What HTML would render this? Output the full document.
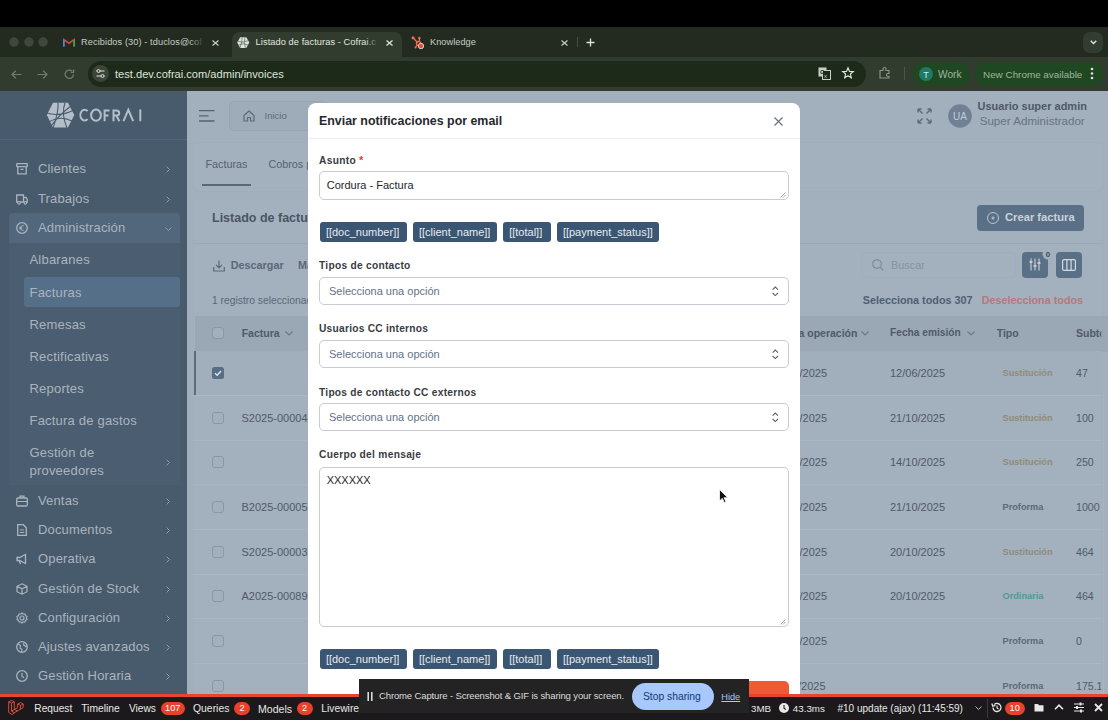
<!DOCTYPE html>
<html><head><meta charset="utf-8">
<style>
*{box-sizing:border-box;margin:0;padding:0}
html,body{width:1108px;height:720px;overflow:hidden;background:#000;font-family:"Liberation Sans",sans-serif}
.a{position:absolute}
.t{position:absolute;white-space:nowrap;line-height:1}
svg{overflow:visible}
</style></head><body>

<div class="a" style="left:0px;top:0px;width:1108px;height:27px;background:#000;"></div>
<div class="a" style="left:0px;top:27px;width:1108px;height:30px;background:#232b21;"></div>
<div class="a" style="left:0px;top:57px;width:1108px;height:34px;background:#313c2e;"></div>
<div class="a" style="left:232px;top:32px;width:170px;height:25px;background:#313c2e;border-radius:8px 8px 0 0"></div>
<svg class="a" style="left:7.6px;top:36px;" width="12" height="12" viewBox="0 0 12 12"><circle cx="6" cy="6" r="4.7" fill="#3f473d"/></svg>
<svg class="a" style="left:22.8px;top:36px;" width="12" height="12" viewBox="0 0 12 12"><circle cx="6" cy="6" r="4.7" fill="#3f473d"/></svg>
<svg class="a" style="left:37.2px;top:36px;" width="12" height="12" viewBox="0 0 12 12"><circle cx="6" cy="6" r="4.7" fill="#3f473d"/></svg>
<svg class="a" style="left:63px;top:38px;" width="12" height="9" viewBox="0 0 12 9"><path d="M0.8 8.5V1.5L6 5.2L11.2 1.5V8.5" fill="none" stroke="#d44638" stroke-width="1.6"/><path d="M0.8 2V8.5" stroke="#4285f4" stroke-width="1.6"/><path d="M11.2 2V8.5" stroke="#34a853" stroke-width="1.6"/></svg>
<div class="t" style="left:81px;top:37.81px;font-size:9.2px;color:#c6ccc3;letter-spacing:0.1px;">Recibidos (30) - tduclos@cof</div>
<div class="a" style="left:190px;top:36px;width:14px;height:12px;background:linear-gradient(90deg,rgba(35,43,33,0),#232b21);"></div>
<svg class="a" style="left:212px;top:40px;" width="7" height="6" viewBox="0 0 7 6"><path d="M0.5 0.5L6.5 5.5M6.5 0.5L0.5 5.5" stroke="#c6ccc3" stroke-width="1.2"/></svg>
<svg class="a" style="left:237px;top:37px;" width="13" height="12" viewBox="0 0 13 12"><polygon points="3.2,0.3 9.3,0.3 12.3,5.6 9.3,10.9 3.2,10.9 0.2,5.6" fill="#dfe5dc"/><path d="M5 0.3Q5.5 4 3 10.9M0.5 4.5Q6 6 12 3.5M1.5 8Q6 5.5 11.5 8M8 0.3Q6.5 5 8.5 10.9" fill="none" stroke="#5d665a" stroke-width="0.7"/></svg>
<div class="t" style="left:255.6px;top:37.81px;font-size:9.2px;color:#e3e7e0;letter-spacing:0.1px;">Listado de facturas - Cofrai.c</div>
<div class="a" style="left:365px;top:36px;width:14px;height:12px;background:linear-gradient(90deg,rgba(49,60,46,0),#313c2e);"></div>
<svg class="a" style="left:386px;top:40px;" width="7" height="6" viewBox="0 0 7 6"><path d="M0.5 0.5L6.5 5.5M6.5 0.5L0.5 5.5" stroke="#e3e7e0" stroke-width="1.2"/></svg>
<svg class="a" style="left:411px;top:35px;" width="14" height="15" viewBox="0 0 14 15"><g stroke="#f26b4f" stroke-width="1.3" fill="none"><path d="M2 2.8L7 8M8.4 3V6.3M6.3 9.8L4.5 12.5"/><circle cx="7.5" cy="8.5" r="2.1"/></g><circle cx="2" cy="2.8" r="1.5" fill="#f26b4f"/><circle cx="8.4" cy="3" r="1.2" fill="#f26b4f"/><circle cx="4.5" cy="12.5" r="1" fill="#f26b4f"/><circle cx="10" cy="11" r="2.7" fill="#f0473a" stroke="#dcdcdc" stroke-width="0.9"/></svg>
<div class="t" style="left:430px;top:37.81px;font-size:9.2px;color:#c6ccc3;letter-spacing:0.05px;">Knowledge</div>
<svg class="a" style="left:561px;top:40px;" width="7" height="6" viewBox="0 0 7 6"><path d="M0.5 0.5L6.5 5.5M6.5 0.5L0.5 5.5" stroke="#c6ccc3" stroke-width="1.2"/></svg>
<div class="a" style="left:577px;top:37px;width:1px;height:10px;background:#454d43;"></div>
<svg class="a" style="left:586px;top:38px;" width="9" height="9" viewBox="0 0 9 9"><path d="M4.5 0.5V8.5M0.5 4.5H8.5" stroke="#dfe3dc" stroke-width="1.3"/></svg>
<div class="a" style="left:1083px;top:32px;width:20px;height:21px;background:#323c30;border-radius:7px"></div>
<svg class="a" style="left:1089.5px;top:40px;" width="7" height="5" viewBox="0 0 7 5"><path d="M0.7 0.7L3.5 3.5L6.3 0.7" fill="none" stroke="#dfe3dc" stroke-width="1.4"/></svg>
<svg class="a" style="left:11px;top:70px;" width="11" height="9" viewBox="0 0 11 9"><path d="M10.5 4.5H1M4.8 0.8L1 4.5L4.8 8.2" fill="none" stroke="#737c70" stroke-width="1.2"/></svg>
<svg class="a" style="left:37px;top:70px;" width="11" height="9" viewBox="0 0 11 9"><path d="M0.5 4.5H10M6.2 0.8L10 4.5L6.2 8.2" fill="none" stroke="#737c70" stroke-width="1.2"/></svg>
<svg class="a" style="left:64px;top:69px;" width="11" height="11" viewBox="0 0 11 11"><path d="M9.5 5.5A4.2 4.2 0 1 1 8.2 2.2" fill="none" stroke="#737c70" stroke-width="1.2"/><path d="M9.6 0.6V3.4H6.8" fill="none" stroke="#737c70" stroke-width="1.2"/></svg>
<div class="a" style="left:88px;top:61px;width:778px;height:26px;background:#1d2a1a;border-radius:13px"></div>
<svg class="a" style="left:92px;top:65px;" width="17" height="17" viewBox="0 0 17 17"><circle cx="8.5" cy="8.5" r="8.5" fill="#3b4539"/><path d="M4.5 6H12.5M4.5 11H12.5" stroke="#dfe3dc" stroke-width="1.1"/><circle cx="6.5" cy="6" r="1.5" fill="#3b4539" stroke="#dfe3dc" stroke-width="1"/><circle cx="10.5" cy="11" r="1.5" fill="#3b4539" stroke="#dfe3dc" stroke-width="1"/></svg>
<div class="t" style="left:115px;top:68.60px;font-size:11.1px;color:#dfe4dc;">test.dev.cofrai.com/admin/invoices</div>
<svg class="a" style="left:818px;top:67px;" width="13" height="13" viewBox="0 0 13 13"><rect x="0.5" y="0.5" width="8" height="9" fill="#c9cfc6"/><rect x="4.5" y="3.5" width="8" height="9" fill="#1d2a1a" stroke="#c9cfc6" stroke-width="1"/><text x="2" y="7" font-size="6" fill="#1d2a1a" font-family="Liberation Sans" font-weight="bold">G</text><text x="6" y="11" font-size="6" fill="#c9cfc6" font-family="Liberation Sans">x</text></svg>
<svg class="a" style="left:842px;top:67px;" width="12" height="12" viewBox="0 0 12 12"><polygon points="6,0.8 7.5,4.4 11.3,4.6 8.4,7 9.3,10.8 6,8.7 2.7,10.8 3.6,7 0.7,4.6 4.5,4.4" fill="none" stroke="#dfe4dc" stroke-width="1.1"/></svg>
<svg class="a" style="left:879px;top:67px;" width="12" height="12" viewBox="0 0 12 12"><path d="M1 3.5H4V2A1.5 1.5 0 0 1 7 2V3.5H10V6.5H9A1.5 1.5 0 0 0 9 9.5H10V11H1Z" fill="none" stroke="#8e968b" stroke-width="1.1"/></svg>
<div class="a" style="left:904px;top:67px;width:1px;height:13px;background:#4d554b;"></div>
<div class="a" style="left:913px;top:62px;width:57px;height:24px;background:#1f4722;border-radius:12px"></div>
<svg class="a" style="left:919px;top:67px;" width="14" height="14" viewBox="0 0 14 14"><circle cx="7" cy="7" r="7" fill="#1f7a67"/><text x="7" y="10.5" font-size="9" fill="#d8e6df" text-anchor="middle" font-family="Liberation Sans">T</text></svg>
<div class="t" style="left:938px;top:70.17px;font-size:10.2px;color:#9fb59b;">Work</div>
<div class="a" style="left:975px;top:62px;width:128px;height:24px;background:#1f4722;border-radius:12px"></div>
<div class="t" style="left:983px;top:69.62px;font-size:9.9px;color:#9fb59b;">New Chrome available</div>
<svg class="a" style="left:1090px;top:67px;" width="4" height="13" viewBox="0 0 4 13"><circle cx="2" cy="2" r="1.3" fill="#dfe4dc"/><circle cx="2" cy="6.5" r="1.3" fill="#dfe4dc"/><circle cx="2" cy="11" r="1.3" fill="#dfe4dc"/></svg>
<div class="a" style="left:0px;top:91px;width:1108px;height:606px;background:#a2afbd;"></div>
<div class="a" style="left:0px;top:91px;width:187px;height:606px;background:#485b6c;"></div>
<svg class="a" style="left:46px;top:102px;" width="29" height="27" viewBox="0 0 29 27"><polygon points="7,0.7 22,0.7 28.3,13 22,25.6 7,25.6 0.8,13" fill="#b3bec9"/><path d="M12 0.5Q13 9 7 26M0.5 11Q14 15 28 8M3 20Q14 13 26 19M19 0.5Q15 12 21 26M25 4Q14 12 5 24" fill="none" stroke="#4b5b6e" stroke-width="1.1"/></svg>
<svg class="a" style="left:79px;top:108px;" width="64" height="15" viewBox="0 0 64 15"><g fill="none" stroke="#b3bec9" stroke-width="2"><path d="M8.6 3.2A4.3 5.4 0 1 0 8.6 11.2"/><ellipse cx="17" cy="7.2" rx="4.9" ry="5.6"/><path d="M25.6 13.2V2.4H30.5M25.6 7.4H29.5"/><path d="M34.5 13.2V2.4H37.6A2.6 2.6 0 0 1 37.6 7.6H34.5M37.3 7.6L40.4 13.2"/><path d="M44.5 13.2L49.3 1.8L54.2 13.2"/><path d="M61.3 1.4V13.2"/></g></svg>
<div class="a" style="left:0px;top:139px;width:187px;height:1px;background:#52637a;"></div>
<div class="a" style="left:9px;top:213px;width:170.5px;height:272px;background:#4b5e71;border-radius:4px 4px 0 0"></div>
<div class="a" style="left:9px;top:213px;width:170.5px;height:29.5px;background:#52677b;border-radius:4px 4px 0 0"></div>
<div class="a" style="left:24px;top:277px;width:155.5px;height:30px;background:#556f88;border-radius:3px"></div>
<div class="t" style="left:38px;top:162.30px;font-size:13px;color:#aab4be;letter-spacing:0.15px;">Clientes</div>
<svg class="a" style="left:16px;top:163.3px;" width="12" height="12" viewBox="0 0 12 12"><rect x="0.7" y="0.7" width="10.6" height="3" rx="0.6" fill="none" stroke="#aab4be" stroke-width="1.3"/><path d="M1.8 3.7V10.8H10.2V3.7M4.5 6.3H7.5" fill="none" stroke="#aab4be" stroke-width="1.3"/></svg>
<svg class="a" style="left:166px;top:166.3px;" width="4" height="7" viewBox="0 0 4 7"><path d="M0.5 0.5L3.5 3.5L0.5 6.5" fill="none" stroke="#8f9aa6" stroke-width="1"/></svg>
<div class="t" style="left:38px;top:191.70px;font-size:13px;color:#aab4be;letter-spacing:0.15px;">Trabajos</div>
<svg class="a" style="left:16px;top:192.7px;" width="12" height="12" viewBox="0 0 12 12"><path d="M0.7 2H7.5V9H0.7ZM7.5 4.5H10L11.3 6.5V9H7.5" fill="none" stroke="#aab4be" stroke-width="1.3"/><circle cx="3" cy="9.8" r="1.3" fill="#485b6c" stroke="#aab4be" stroke-width="1.1"/><circle cx="9.3" cy="9.8" r="1.3" fill="#485b6c" stroke="#aab4be" stroke-width="1.1"/></svg>
<svg class="a" style="left:166px;top:195.7px;" width="4" height="7" viewBox="0 0 4 7"><path d="M0.5 0.5L3.5 3.5L0.5 6.5" fill="none" stroke="#8f9aa6" stroke-width="1"/></svg>
<div class="t" style="left:38px;top:221.00px;font-size:13px;color:#aab4be;letter-spacing:0.15px;">Administración</div>
<svg class="a" style="left:16px;top:222px;" width="12" height="12" viewBox="0 0 12 12"><circle cx="6" cy="6" r="5.3" fill="none" stroke="#aab4be" stroke-width="1.3"/><path d="M7.8 3.8A2.4 2.4 0 1 0 7.8 8.2M3.2 5.3H6.2M3.2 6.8H6.2" fill="none" stroke="#aab4be" stroke-width="1"/></svg>
<svg class="a" style="left:165px;top:227px;" width="7" height="4" viewBox="0 0 7 4"><path d="M0.5 0.5L3.5 3.5L6.5 0.5" fill="none" stroke="#8f9aa6" stroke-width="1"/></svg>
<div class="t" style="left:29.5px;top:253.00px;font-size:13px;color:#aab4be;letter-spacing:0.2px;">Albaranes</div>
<div class="t" style="left:29.5px;top:285.70px;font-size:13px;color:#aab4be;letter-spacing:0.2px;">Facturas</div>
<div class="t" style="left:29.5px;top:317.80px;font-size:13px;color:#aab4be;letter-spacing:0.2px;">Remesas</div>
<div class="t" style="left:29.5px;top:349.70px;font-size:13px;color:#aab4be;letter-spacing:0.2px;">Rectificativas</div>
<div class="t" style="left:29.5px;top:381.70px;font-size:13px;color:#aab4be;letter-spacing:0.2px;">Reportes</div>
<div class="t" style="left:29.5px;top:414.00px;font-size:13px;color:#aab4be;letter-spacing:0.2px;">Factura de gastos</div>
<div class="t" style="left:29.5px;top:446.30px;font-size:13px;color:#aab4be;letter-spacing:0.2px;">Gestión de</div>
<div class="t" style="left:29.5px;top:464.00px;font-size:13px;color:#aab4be;letter-spacing:0.2px;">proveedores</div>
<svg class="a" style="left:166px;top:459px;" width="4" height="7" viewBox="0 0 4 7"><path d="M0.5 0.5L3.5 3.5L0.5 6.5" fill="none" stroke="#8f9aa6" stroke-width="1"/></svg>
<div class="t" style="left:38px;top:494.00px;font-size:13px;color:#aab4be;letter-spacing:0.15px;">Ventas</div>
<svg class="a" style="left:16px;top:495px;" width="12" height="12" viewBox="0 0 12 12"><rect x="0.7" y="3" width="10.6" height="8" rx="1.2" fill="none" stroke="#aab4be" stroke-width="1.3"/><path d="M4 3V1.2H8V3M0.7 6.5H11.3" fill="none" stroke="#aab4be" stroke-width="1.2"/></svg>
<svg class="a" style="left:166px;top:498px;" width="4" height="7" viewBox="0 0 4 7"><path d="M0.5 0.5L3.5 3.5L0.5 6.5" fill="none" stroke="#8f9aa6" stroke-width="1"/></svg>
<div class="t" style="left:38px;top:523.00px;font-size:13px;color:#aab4be;letter-spacing:0.15px;">Documentos</div>
<svg class="a" style="left:16px;top:524px;" width="12" height="12" viewBox="0 0 12 12"><path d="M1.7 0.7H7.3L10.3 3.7V11.3H1.7Z" fill="none" stroke="#aab4be" stroke-width="1.3"/><path d="M3.8 6H8.2M3.8 8.5H8.2" stroke="#aab4be" stroke-width="1.1"/></svg>
<svg class="a" style="left:166px;top:527px;" width="4" height="7" viewBox="0 0 4 7"><path d="M0.5 0.5L3.5 3.5L0.5 6.5" fill="none" stroke="#8f9aa6" stroke-width="1"/></svg>
<div class="t" style="left:38px;top:552.30px;font-size:13px;color:#aab4be;letter-spacing:0.15px;">Operativa</div>
<svg class="a" style="left:16px;top:553.3px;" width="12" height="12" viewBox="0 0 12 12"><path d="M1 4.5H3.5L9.5 1.5V10.5L3.5 7.5H1Z" fill="none" stroke="#aab4be" stroke-width="1.3"/><path d="M3 7.5L4.5 11" stroke="#aab4be" stroke-width="1.3"/></svg>
<svg class="a" style="left:166px;top:556.3px;" width="4" height="7" viewBox="0 0 4 7"><path d="M0.5 0.5L3.5 3.5L0.5 6.5" fill="none" stroke="#8f9aa6" stroke-width="1"/></svg>
<div class="t" style="left:38px;top:581.50px;font-size:13px;color:#aab4be;letter-spacing:0.15px;">Gestión de Stock</div>
<svg class="a" style="left:16px;top:582.5px;" width="12" height="12" viewBox="0 0 12 12"><path d="M6 0.8L11 3.3V8.7L6 11.2L1 8.7V3.3Z M1 3.3L6 5.8L11 3.3M6 5.8V11.2" fill="none" stroke="#aab4be" stroke-width="1.2"/></svg>
<svg class="a" style="left:166px;top:585.5px;" width="4" height="7" viewBox="0 0 4 7"><path d="M0.5 0.5L3.5 3.5L0.5 6.5" fill="none" stroke="#8f9aa6" stroke-width="1"/></svg>
<div class="t" style="left:38px;top:611.00px;font-size:13px;color:#aab4be;letter-spacing:0.15px;">Configuración</div>
<svg class="a" style="left:16px;top:612px;" width="12" height="12" viewBox="0 0 12 12"><circle cx="6" cy="6" r="2" fill="none" stroke="#aab4be" stroke-width="1.2"/><path d="M6 0.8L7.2 2.2L9 1.8L9.4 3.6L11.1 4.4L10.3 6L11.1 7.6L9.4 8.4L9 10.2L7.2 9.8L6 11.2L4.8 9.8L3 10.2L2.6 8.4L0.9 7.6L1.7 6L0.9 4.4L2.6 3.6L3 1.8L4.8 2.2Z" fill="none" stroke="#aab4be" stroke-width="1.1"/></svg>
<svg class="a" style="left:166px;top:615px;" width="4" height="7" viewBox="0 0 4 7"><path d="M0.5 0.5L3.5 3.5L0.5 6.5" fill="none" stroke="#8f9aa6" stroke-width="1"/></svg>
<div class="t" style="left:38px;top:640.00px;font-size:13px;color:#aab4be;letter-spacing:0.15px;">Ajustes avanzados</div>
<svg class="a" style="left:16px;top:641px;" width="12" height="12" viewBox="0 0 12 12"><circle cx="6" cy="6" r="5.3" fill="none" stroke="#aab4be" stroke-width="1.3"/><path d="M2 3L4.5 4.5L4 7L6 8.5L5.5 11M8 1.5L7.5 4L10 5.5L11 5" fill="none" stroke="#aab4be" stroke-width="1.1"/></svg>
<svg class="a" style="left:166px;top:644px;" width="4" height="7" viewBox="0 0 4 7"><path d="M0.5 0.5L3.5 3.5L0.5 6.5" fill="none" stroke="#8f9aa6" stroke-width="1"/></svg>
<div class="t" style="left:38px;top:669.00px;font-size:13px;color:#aab4be;letter-spacing:0.15px;">Gestión Horaria</div>
<svg class="a" style="left:16px;top:670px;" width="12" height="12" viewBox="0 0 12 12"><circle cx="6" cy="6" r="5.3" fill="none" stroke="#aab4be" stroke-width="1.3"/><path d="M6 3V6.3L8 7.8" fill="none" stroke="#aab4be" stroke-width="1.2"/></svg>
<svg class="a" style="left:166px;top:673px;" width="4" height="7" viewBox="0 0 4 7"><path d="M0.5 0.5L3.5 3.5L0.5 6.5" fill="none" stroke="#8f9aa6" stroke-width="1"/></svg>
<svg class="a" style="left:199px;top:110px;" width="16" height="12" viewBox="0 0 16 12"><path d="M0 0.7H15.5M0 5.9H9.5M0 11H15.5" stroke="#56636f" stroke-width="1.3"/></svg>
<div class="a" style="left:229px;top:101px;width:100px;height:30px;background:#9eabb8;border:1px solid #97a4b1;border-radius:5px"></div>
<svg class="a" style="left:243px;top:110px;" width="12" height="12" viewBox="0 0 12 12"><path d="M1 5.5L6 1L11 5.5V11H7.5V7.5H4.5V11H1Z" fill="none" stroke="#5d6a78" stroke-width="1.2" stroke-linejoin="round"/></svg>
<div class="t" style="left:264.5px;top:110.56px;font-size:9.5px;color:#5f6b79;">Inicio</div>
<svg class="a" style="left:917px;top:108px;" width="15" height="16" viewBox="0 0 15 16"><path d="M1 1L5.5 5.5M1 1H4.5M1 1V4.5M14 1L9.5 5.5M14 1H10.5M14 1V4.5M1 15L5.5 10.5M1 15H4.5M1 15V11.5M14 15L9.5 10.5M14 15H10.5M14 15V11.5" fill="none" stroke="#5d6a78" stroke-width="1.4"/></svg>
<svg class="a" style="left:948px;top:104px;" width="24" height="24" viewBox="0 0 24 24"><circle cx="12" cy="12" r="11.8" fill="#6f8193"/><text x="12" y="15.6" font-size="10" fill="#c3ccd5" text-anchor="middle" font-family="Liberation Sans">UA</text></svg>
<div class="t" style="left:977.5px;top:100.99px;font-size:11px;color:#4e5966;font-weight:bold;">Usuario super admin</div>
<div class="t" style="left:979.7px;top:115.48px;font-size:11.6px;color:#68737f;">Super Administrador</div>
<div class="a" style="left:187px;top:143px;width:921px;height:1px;background:#a0adba;"></div>
<div class="a" style="left:193px;top:142px;width:910px;height:50px;background:#a3b0be;border:1px solid #a0adba;border-radius:6px"></div>
<div class="t" style="left:205.4px;top:159.06px;font-size:10.8px;color:#56626f;">Facturas</div>
<div class="t" style="left:268.4px;top:159.06px;font-size:10.8px;color:#56626f;">Cobros pendientes</div>
<div class="a" style="left:202px;top:183.5px;width:49px;height:2px;background:#5b6877;"></div>
<div class="a" style="left:193px;top:197px;width:910px;height:520px;background:#a3b0be;border:1px solid #a0adba;border-radius:6px"></div>
<div class="t" style="left:212px;top:212.02px;font-size:12.5px;color:#4a5563;font-weight:bold;">Listado de facturas</div>
<div class="a" style="left:977px;top:205px;width:107px;height:26px;background:#5a7087;border-radius:4px"></div>
<svg class="a" style="left:987px;top:212px;" width="12" height="12" viewBox="0 0 12 12"><circle cx="6" cy="6" r="5.5" fill="none" stroke="#c2ccd6" stroke-width="0.9"/><path d="M6 4.5V7.5M4.5 6H7.5" stroke="#c2ccd6" stroke-width="1"/></svg>
<div class="t" style="left:1005px;top:211.82px;font-size:11.2px;color:#c9d2db;font-weight:bold;">Crear factura</div>
<div class="a" style="left:193px;top:243px;width:910px;height:1px;background:#9aa7b4;"></div>
<svg class="a" style="left:213px;top:260px;" width="12" height="12" viewBox="0 0 12 12"><path d="M6 0.5V7.5M3 4.8L6 7.8L9 4.8M0.7 7V11H11.3V7" fill="none" stroke="#5d6a78" stroke-width="1.2"/></svg>
<div class="t" style="left:230.8px;top:260.06px;font-size:10.8px;color:#5a6878;font-weight:bold;">Descargar</div>
<div class="t" style="left:298px;top:260.06px;font-size:10.8px;color:#5a6878;font-weight:bold;">Marcar</div>
<div class="a" style="left:861px;top:252px;width:155px;height:26px;background:#a3b0be;border:1px solid #a0adba;border-radius:5px"></div>
<svg class="a" style="left:872px;top:259px;" width="12" height="12" viewBox="0 0 12 12"><circle cx="5" cy="5" r="4.3" fill="none" stroke="#7b8795" stroke-width="1.1"/><path d="M8.2 8.2L11.3 11.3" stroke="#7b8795" stroke-width="1.1"/></svg>
<div class="t" style="left:891px;top:259.77px;font-size:10.9px;color:#8893a0;">Buscar</div>
<div class="a" style="left:1022px;top:252px;width:26px;height:26px;background:#5a7087;border-radius:4px"></div>
<svg class="a" style="left:1029px;top:258px;" width="12" height="13" viewBox="0 0 12 13"><path d="M2 0.5V12.5M6 0.5V12.5M10 0.5V12.5" stroke="#d4dbe2" stroke-width="1"/><path d="M0.5 4H3.5M4.5 8H7.5M8.5 5H11.5" stroke="#d4dbe2" stroke-width="1.5"/></svg>
<svg class="a" style="left:1042px;top:248px;" width="12" height="12" viewBox="0 0 12 12"><circle cx="6" cy="6" r="5.5" fill="#a3b0be"/><text x="6" y="9" font-size="8" fill="#3f4a56" text-anchor="middle" font-family="Liberation Sans" font-weight="bold">0</text></svg>
<div class="a" style="left:1056px;top:252px;width:26px;height:26px;background:#5a7087;border-radius:4px"></div>
<svg class="a" style="left:1062px;top:259px;" width="14" height="12" viewBox="0 0 14 12"><rect x="0.6" y="0.6" width="12.8" height="10.8" rx="1.5" fill="none" stroke="#d4dbe2" stroke-width="1.2"/><path d="M4.9 0.6V11.4M9.1 0.6V11.4" stroke="#d4dbe2" stroke-width="1.2"/></svg>
<div class="t" style="left:212px;top:295.98px;font-size:10.3px;color:#5b6878;">1 registro seleccionado</div>
<div class="t" style="left:862.7px;top:295.16px;font-size:10.8px;color:#4e6073;font-weight:bold;">Selecciona todos 307</div>
<div class="t" style="left:981.7px;top:295.16px;font-size:10.8px;color:#b7787a;font-weight:bold;">Deselecciona todos</div>
<div class="a" style="left:195px;top:316px;width:913px;height:36px;background:#9aa7b4;"></div>
<svg class="a" style="left:212px;top:327px;" width="12" height="12" viewBox="0 0 12 12"><rect x="0.5" y="0.5" width="11" height="11" rx="2.5" fill="#a2afbd" stroke="#8a97a4" stroke-width="1"/></svg>
<div class="t" style="left:241.7px;top:327.61px;font-size:10.5px;color:#4f5b68;font-weight:bold;">Factura</div>
<svg class="a" style="left:285px;top:331px;" width="8" height="5" viewBox="0 0 8 5"><path d="M0.5 0.5L4 4L7.5 0.5" fill="none" stroke="#6b7783" stroke-width="1.1"/></svg>
<div class="t" style="left:774px;top:327.81px;font-size:10.5px;color:#4f5b68;font-weight:bold;">Fecha operación</div>
<svg class="a" style="left:861px;top:331px;" width="8" height="5" viewBox="0 0 8 5"><path d="M0.5 0.5L4 4L7.5 0.5" fill="none" stroke="#6b7783" stroke-width="1.1"/></svg>
<div class="t" style="left:890px;top:328.07px;font-size:10.2px;color:#4f5b68;font-weight:bold;">Fecha emisión</div>
<svg class="a" style="left:967px;top:331px;" width="8" height="5" viewBox="0 0 8 5"><path d="M0.5 0.5L4 4L7.5 0.5" fill="none" stroke="#6b7783" stroke-width="1.1"/></svg>
<div class="t" style="left:996.7px;top:327.81px;font-size:10.5px;color:#4f5b68;font-weight:bold;">Tipo</div>
<div class="t" style="left:1076px;top:327.81px;font-size:10.5px;color:#4f5b68;font-weight:bold;">Subtotal</div>
<div class="a" style="left:193px;top:351px;width:910px;height:44px;background:#a1aebb;"></div>
<div class="a" style="left:194px;top:351px;width:2px;height:44px;background:#5f6c79;"></div>
<div class="a" style="left:193px;top:395px;width:915px;height:1px;background:#abb7c3;"></div>
<svg class="a" style="left:212px;top:367px;" width="12" height="12" viewBox="0 0 12 12"><rect x="0" y="0" width="12" height="12" rx="2.5" fill="#566f86"/><path d="M3 6.2L5.2 8.3L9 4" fill="none" stroke="#dfe5ea" stroke-width="1.4"/></svg>
<div class="t" style="left:772px;top:367.99px;font-size:11px;color:#4f5b68;">12/06/2025</div>
<div class="t" style="left:890px;top:367.99px;font-size:11px;color:#4f5b68;">12/06/2025</div>
<div class="t" style="left:1002.5px;top:369.21px;font-size:9.2px;color:#8f8c78;font-weight:bold;">Sustitución</div>
<div class="t" style="left:1076px;top:368.33px;font-size:10.6px;color:#4f5b68;">47</div>
<div class="a" style="left:193px;top:440px;width:915px;height:1px;background:#abb7c3;"></div>
<svg class="a" style="left:212px;top:412px;" width="12" height="12" viewBox="0 0 12 12"><rect x="0.5" y="0.5" width="11" height="11" rx="2.5" fill="#a2afbd" stroke="#8a97a4" stroke-width="1"/></svg>
<div class="t" style="left:241.5px;top:412.99px;font-size:11px;color:#4f5b68;">S2025-00004</div>
<div class="t" style="left:772px;top:412.99px;font-size:11px;color:#4f5b68;">21/10/2025</div>
<div class="t" style="left:890px;top:412.99px;font-size:11px;color:#4f5b68;">21/10/2025</div>
<div class="t" style="left:1002.5px;top:414.21px;font-size:9.2px;color:#8f8c78;font-weight:bold;">Sustitución</div>
<div class="t" style="left:1076px;top:413.33px;font-size:10.6px;color:#4f5b68;">100</div>
<div class="a" style="left:193px;top:484px;width:915px;height:1px;background:#abb7c3;"></div>
<svg class="a" style="left:212px;top:456px;" width="12" height="12" viewBox="0 0 12 12"><rect x="0.5" y="0.5" width="11" height="11" rx="2.5" fill="#a2afbd" stroke="#8a97a4" stroke-width="1"/></svg>
<div class="t" style="left:772px;top:456.99px;font-size:11px;color:#4f5b68;">14/10/2025</div>
<div class="t" style="left:890px;top:456.99px;font-size:11px;color:#4f5b68;">14/10/2025</div>
<div class="t" style="left:1002.5px;top:458.21px;font-size:9.2px;color:#8f8c78;font-weight:bold;">Sustitución</div>
<div class="t" style="left:1076px;top:457.33px;font-size:10.6px;color:#4f5b68;">250</div>
<div class="a" style="left:193px;top:529px;width:915px;height:1px;background:#abb7c3;"></div>
<svg class="a" style="left:212px;top:501px;" width="12" height="12" viewBox="0 0 12 12"><rect x="0.5" y="0.5" width="11" height="11" rx="2.5" fill="#a2afbd" stroke="#8a97a4" stroke-width="1"/></svg>
<div class="t" style="left:241.5px;top:501.99px;font-size:11px;color:#4f5b68;">B2025-00005</div>
<div class="t" style="left:772px;top:501.99px;font-size:11px;color:#4f5b68;">21/10/2025</div>
<div class="t" style="left:890px;top:501.99px;font-size:11px;color:#4f5b68;">21/10/2025</div>
<div class="t" style="left:1002.5px;top:503.21px;font-size:9.2px;color:#5d6a78;font-weight:bold;">Proforma</div>
<div class="t" style="left:1076px;top:502.33px;font-size:10.6px;color:#4f5b68;">1000</div>
<div class="a" style="left:193px;top:574px;width:915px;height:1px;background:#abb7c3;"></div>
<svg class="a" style="left:212px;top:546px;" width="12" height="12" viewBox="0 0 12 12"><rect x="0.5" y="0.5" width="11" height="11" rx="2.5" fill="#a2afbd" stroke="#8a97a4" stroke-width="1"/></svg>
<div class="t" style="left:241.5px;top:546.99px;font-size:11px;color:#4f5b68;">S2025-00003</div>
<div class="t" style="left:772px;top:546.99px;font-size:11px;color:#4f5b68;">20/10/2025</div>
<div class="t" style="left:890px;top:546.99px;font-size:11px;color:#4f5b68;">20/10/2025</div>
<div class="t" style="left:1002.5px;top:548.21px;font-size:9.2px;color:#8f8c78;font-weight:bold;">Sustitución</div>
<div class="t" style="left:1076px;top:547.33px;font-size:10.6px;color:#4f5b68;">464</div>
<div class="a" style="left:193px;top:618px;width:915px;height:1px;background:#abb7c3;"></div>
<svg class="a" style="left:212px;top:590px;" width="12" height="12" viewBox="0 0 12 12"><rect x="0.5" y="0.5" width="11" height="11" rx="2.5" fill="#a2afbd" stroke="#8a97a4" stroke-width="1"/></svg>
<div class="t" style="left:241.5px;top:590.99px;font-size:11px;color:#4f5b68;">A2025-00089</div>
<div class="t" style="left:772px;top:590.99px;font-size:11px;color:#4f5b68;">20/10/2025</div>
<div class="t" style="left:890px;top:590.99px;font-size:11px;color:#4f5b68;">20/10/2025</div>
<div class="t" style="left:1002.5px;top:592.21px;font-size:9.2px;color:#4f9b91;font-weight:bold;">Ordinaria</div>
<div class="t" style="left:1076px;top:591.33px;font-size:10.6px;color:#4f5b68;">464</div>
<div class="a" style="left:193px;top:663px;width:915px;height:1px;background:#abb7c3;"></div>
<svg class="a" style="left:212px;top:635px;" width="12" height="12" viewBox="0 0 12 12"><rect x="0.5" y="0.5" width="11" height="11" rx="2.5" fill="#a2afbd" stroke="#8a97a4" stroke-width="1"/></svg>
<div class="t" style="left:772px;top:635.99px;font-size:11px;color:#4f5b68;">21/10/2025</div>
<div class="t" style="left:1002.5px;top:637.21px;font-size:9.2px;color:#5d6a78;font-weight:bold;">Proforma</div>
<div class="t" style="left:1076px;top:636.33px;font-size:10.6px;color:#4f5b68;">0</div>
<div class="a" style="left:193px;top:708px;width:915px;height:1px;background:#abb7c3;"></div>
<svg class="a" style="left:212px;top:680px;" width="12" height="12" viewBox="0 0 12 12"><rect x="0.5" y="0.5" width="11" height="11" rx="2.5" fill="#a2afbd" stroke="#8a97a4" stroke-width="1"/></svg>
<div class="t" style="left:770.5px;top:680.99px;font-size:11px;color:#4f5b68;">21/10/2025</div>
<div class="t" style="left:1002.5px;top:682.21px;font-size:9.2px;color:#5d6a78;font-weight:bold;">Proforma</div>
<div class="t" style="left:1076px;top:681.33px;font-size:10.6px;color:#4f5b68;">175.1</div>
<div class="a" style="left:1101px;top:316px;width:7px;height:36px;background:linear-gradient(90deg,rgba(154,167,180,0.6),#9aa7b4 40%);"></div>
<div class="a" style="left:1101px;top:352px;width:7px;height:342px;background:linear-gradient(90deg,rgba(162,175,189,0.6),#a2afbd 40%);"></div>
<div class="a" style="left:1103px;top:395px;width:1px;height:299px;background:#a8b4c0;"></div>
<div class="a" style="left:308px;top:103px;width:492px;height:620px;background:#fff;border-radius:8px"></div>
<div class="a" style="left:308px;top:138px;width:492px;height:1px;background:#f0f1f3;"></div>
<div class="t" style="left:319px;top:115.00px;font-size:12.4px;color:#25282d;font-weight:bold;">Enviar notificaciones por email</div>
<svg class="a" style="left:774px;top:117px;" width="9" height="9" viewBox="0 0 9 9"><path d="M0.5 0.5L8.5 8.5M8.5 0.5L0.5 8.5" stroke="#6b7280" stroke-width="1.2"/></svg>
<div class="t" style="left:319px;top:155.97px;font-size:10.2px;color:#383c42;font-weight:bold;letter-spacing:0.35px;">Asunto</div>
<div class="t" style="left:359px;top:155.29px;font-size:11px;color:#e0443a;font-weight:bold;">*</div>
<div class="a" style="left:319px;top:171px;width:470px;height:29px;border:1px solid #c8cbcf;border-radius:5px;background:#fff"></div>
<div class="t" style="left:326.7px;top:179.69px;font-size:11px;color:#24272c;">Cordura - Factura</div>
<svg class="a" style="left:780px;top:192px;" width="6" height="6" viewBox="0 0 6 6"><path d="M5.5 0.5L0.5 5.5M5.5 3L3 5.5" stroke="#9aa0a6" stroke-width="0.9"/></svg>
<div class="a" style="left:319.7px;top:222px;width:87.1px;height:20px;background:#3b5673;border-radius:3px"></div>
<div class="t" style="left:325.9px;top:226.69px;font-size:11px;color:#e6ebf0;">[[doc_number]]</div>
<div class="a" style="left:412.7px;top:222px;width:84.2px;height:20px;background:#3b5673;border-radius:3px"></div>
<div class="t" style="left:418.9px;top:226.69px;font-size:11px;color:#e6ebf0;">[[client_name]]</div>
<div class="a" style="left:503px;top:222px;width:47.7px;height:20px;background:#3b5673;border-radius:3px"></div>
<div class="t" style="left:509.2px;top:226.69px;font-size:11px;color:#e6ebf0;">[[total]]</div>
<div class="a" style="left:556.7px;top:222px;width:102.6px;height:20px;background:#3b5673;border-radius:3px"></div>
<div class="t" style="left:562.9000000000001px;top:226.69px;font-size:11px;color:#e6ebf0;">[[payment_status]]</div>
<div class="t" style="left:319px;top:260.87px;font-size:10.2px;color:#383c42;font-weight:bold;letter-spacing:0.27px;">Tipos de contacto</div>
<div class="a" style="left:319px;top:277px;width:470px;height:28px;border:1px solid #c8cbcf;border-radius:5px;background:#fff"></div>
<div class="t" style="left:329px;top:285.69px;font-size:11px;color:#5f7287;">Selecciona una opción</div>
<svg class="a" style="left:772px;top:286.3px;" width="7" height="11" viewBox="0 0 7 11"><path d="M0.6 3.6L3.3 1L6 3.6M0.6 7L3.3 9.6L6 7" fill="none" stroke="#56606d" stroke-width="1.05"/></svg>
<div class="t" style="left:319px;top:324.27px;font-size:10.2px;color:#383c42;font-weight:bold;letter-spacing:0.25px;">Usuarios CC internos</div>
<div class="a" style="left:319px;top:340px;width:470px;height:28px;border:1px solid #c8cbcf;border-radius:5px;background:#fff"></div>
<div class="t" style="left:329px;top:348.69px;font-size:11px;color:#5f7287;">Selecciona una opción</div>
<svg class="a" style="left:772px;top:349.3px;" width="7" height="11" viewBox="0 0 7 11"><path d="M0.6 3.6L3.3 1L6 3.6M0.6 7L3.3 9.6L6 7" fill="none" stroke="#56606d" stroke-width="1.05"/></svg>
<div class="t" style="left:319px;top:387.77px;font-size:10.2px;color:#383c42;font-weight:bold;letter-spacing:0.26px;">Tipos de contacto CC externos</div>
<div class="a" style="left:319px;top:403px;width:470px;height:28px;border:1px solid #c8cbcf;border-radius:5px;background:#fff"></div>
<div class="t" style="left:329px;top:411.99px;font-size:11px;color:#5f7287;">Selecciona una opción</div>
<svg class="a" style="left:772px;top:412.3px;" width="7" height="11" viewBox="0 0 7 11"><path d="M0.6 3.6L3.3 1L6 3.6M0.6 7L3.3 9.6L6 7" fill="none" stroke="#56606d" stroke-width="1.05"/></svg>
<div class="t" style="left:319px;top:450.37px;font-size:10.2px;color:#383c42;font-weight:bold;letter-spacing:0.3px;">Cuerpo del mensaje</div>
<div class="a" style="left:319px;top:467px;width:470px;height:159.6px;border:1px solid #c8cbcf;border-radius:5px;background:#fff"></div>
<div class="t" style="left:326.7px;top:474.99px;font-size:11px;color:#24272c;">XXXXXX</div>
<svg class="a" style="left:780px;top:618.6px;" width="6" height="6" viewBox="0 0 6 6"><path d="M5.5 0.5L0.5 5.5M5.5 3L3 5.5" stroke="#9aa0a6" stroke-width="0.9"/></svg>
<div class="a" style="left:319.7px;top:649px;width:87.1px;height:20px;background:#3b5673;border-radius:3px"></div>
<div class="t" style="left:325.9px;top:653.69px;font-size:11px;color:#e6ebf0;">[[doc_number]]</div>
<div class="a" style="left:412.7px;top:649px;width:84.2px;height:20px;background:#3b5673;border-radius:3px"></div>
<div class="t" style="left:418.9px;top:653.69px;font-size:11px;color:#e6ebf0;">[[client_name]]</div>
<div class="a" style="left:503px;top:649px;width:47.7px;height:20px;background:#3b5673;border-radius:3px"></div>
<div class="t" style="left:509.2px;top:653.69px;font-size:11px;color:#e6ebf0;">[[total]]</div>
<div class="a" style="left:556.7px;top:649px;width:102.6px;height:20px;background:#3b5673;border-radius:3px"></div>
<div class="t" style="left:562.9000000000001px;top:653.69px;font-size:11px;color:#e6ebf0;">[[payment_status]]</div>
<div class="a" style="left:700px;top:681px;width:89px;height:30px;background:#ef5a34;border-radius:5px"></div>
<svg class="a" style="left:719px;top:489px;" width="9" height="14" viewBox="0 0 9 14"><path d="M0.5 0.5V12L3.3 9.4L5.3 13.5L7 12.7L5 8.7H8.8Z" fill="#111" stroke="#fff" stroke-width="0.8"/></svg>
<div class="a" style="left:0px;top:694px;width:1108px;height:3px;background:#e8452f;"></div>
<div class="a" style="left:0px;top:697px;width:1108px;height:23px;background:#1b191b;"></div>
<svg class="a" style="left:8px;top:700px;" width="16" height="16" viewBox="0 0 16 16"><g fill="none" stroke="#e5533d" stroke-width="0.9" stroke-linejoin="round"><path d="M0.7 1.8L3.5 0.4L6.3 1.8V9.5L9.6 7.7V4L12.4 2.6L15.2 4V7.6L7 12.3L4 14.5L0.7 12.5Z"/><path d="M0.7 1.8L3.5 3.2L6.3 1.8M3.5 3.2V11.2L6.3 9.5M3.5 11.2L7 12.9M9.6 4L12.4 5.4L15.2 4M12.4 5.4V9.2M6.3 9.5L9.6 11"/></g></svg>
<div class="t" style="left:34.3px;top:703.97px;font-size:10.2px;color:#e8e8e8;">Request</div>
<div class="t" style="left:81.2px;top:703.88px;font-size:10.3px;color:#e8e8e8;">Timeline</div>
<div class="t" style="left:128.9px;top:703.97px;font-size:10.2px;color:#e8e8e8;">Views</div>
<div class="a" style="left:160.6px;top:702px;width:24.200000000000017px;height:13px;background:#e8412c;border-radius:7px"></div>
<div class="t" style="left:172.7px;top:704.21px;font-size:9.2px;color:#fff;transform:translateX(-50%)">107</div>
<div class="t" style="left:193px;top:703.80px;font-size:10.4px;color:#e8e8e8;">Queries</div>
<div class="a" style="left:234px;top:702px;width:16px;height:13px;background:#e8412c;border-radius:7px"></div>
<div class="t" style="left:242.0px;top:704.21px;font-size:9.2px;color:#fff;transform:translateX(-50%)">2</div>
<div class="t" style="left:258px;top:703.63px;font-size:10.6px;color:#e8e8e8;">Models</div>
<div class="a" style="left:296.7px;top:702px;width:15.900000000000034px;height:13px;background:#e8412c;border-radius:7px"></div>
<div class="t" style="left:304.65px;top:704.21px;font-size:9.2px;color:#fff;transform:translateX(-50%)">2</div>
<div class="t" style="left:321.3px;top:703.88px;font-size:10.3px;color:#e8e8e8;">Livewire</div>
<div class="t" style="left:751px;top:704.30px;font-size:9.8px;color:#e8e8e8;">3MB</div>
<svg class="a" style="left:779px;top:703px;" width="10" height="10" viewBox="0 0 10 10"><circle cx="5" cy="5" r="5" fill="#e8e8e8"/><path d="M5 2V5.3L6.8 6.5" fill="none" stroke="#1e1e1e" stroke-width="1.1"/></svg>
<div class="t" style="left:792.8px;top:704.30px;font-size:9.8px;color:#e8e8e8;">43.3ms</div>
<div class="t" style="left:837.5px;top:704.13px;font-size:10px;color:#e8e8e8;">#10 update (ajax) (11:45:59)</div>
<svg class="a" style="left:975px;top:706px;" width="7" height="4" viewBox="0 0 7 4"><path d="M0.5 0.5L3.5 3.5L6.5 0.5" fill="none" stroke="#bbb" stroke-width="1"/></svg>
<div class="a" style="left:987px;top:699px;width:1px;height:19px;background:#3a3a3a;"></div>
<svg class="a" style="left:991px;top:702px;" width="11" height="11" viewBox="0 0 11 11"><path d="M2 5.5A4 4 0 1 0 3.2 2.6" fill="none" stroke="#e8e8e8" stroke-width="1.3"/><path d="M0.8 1.5L1.8 4.2L4.5 3.5" fill="none" stroke="#e8e8e8" stroke-width="1.2"/><path d="M6 3.5V6L7.5 7" fill="none" stroke="#e8e8e8" stroke-width="1.1"/></svg>
<div class="a" style="left:1004.7px;top:702px;width:20px;height:13px;background:#e8412c;border-radius:7px"></div>
<div class="t" style="left:1014.7px;top:704.21px;font-size:9.2px;color:#fff;transform:translateX(-50%)">10</div>
<svg class="a" style="left:1034px;top:703px;" width="10" height="9" viewBox="0 0 10 9"><path d="M0.5 1H4L5 2.2H9.5V8.5H0.5Z" fill="#e8e8e8"/></svg>
<svg class="a" style="left:1054px;top:704px;" width="10" height="6" viewBox="0 0 10 6"><path d="M1 5.2L5 1.2L9 5.2" fill="none" stroke="#e8e8e8" stroke-width="1.6"/></svg>
<svg class="a" style="left:1074px;top:702px;" width="10" height="11" viewBox="0 0 10 11"><path d="M0 2H10M0 5.5H10M0 9H10" stroke="#e8e8e8" stroke-width="1.1"/><rect x="5.5" y="0.5" width="2" height="3" fill="#e8e8e8"/><rect x="2" y="4" width="2" height="3" fill="#e8e8e8"/><rect x="6" y="7.5" width="2" height="3" fill="#e8e8e8"/></svg>
<svg class="a" style="left:1094px;top:703px;" width="9" height="9" viewBox="0 0 9 9"><path d="M1 1L8 8M8 1L1 8" stroke="#e8e8e8" stroke-width="1.8"/></svg>
<div class="a" style="left:359px;top:679px;width:390px;height:34px;background:#232323;"></div>
<svg class="a" style="left:367px;top:692px;" width="6" height="9" viewBox="0 0 6 9"><path d="M1.2 0V9M4.8 0V9" stroke="#d8d8d8" stroke-width="1.6"/></svg>
<div class="t" style="left:379px;top:691.16px;font-size:9.5px;color:#dcdcdc;letter-spacing:-0.13px;">Chrome Capture - Screenshot &amp; GIF is sharing your screen.</div>
<div class="a" style="left:631.5px;top:683px;width:82px;height:27px;background:#a8c7fa;border-radius:14px"></div>
<div class="t" style="left:643px;top:692.08px;font-size:10.3px;color:#0e3a78;">Stop sharing</div>
<div class="t" style="left:721.3px;top:693.01px;font-size:9.2px;color:#a8c7fa;text-decoration:underline">Hide</div>
</body></html>
